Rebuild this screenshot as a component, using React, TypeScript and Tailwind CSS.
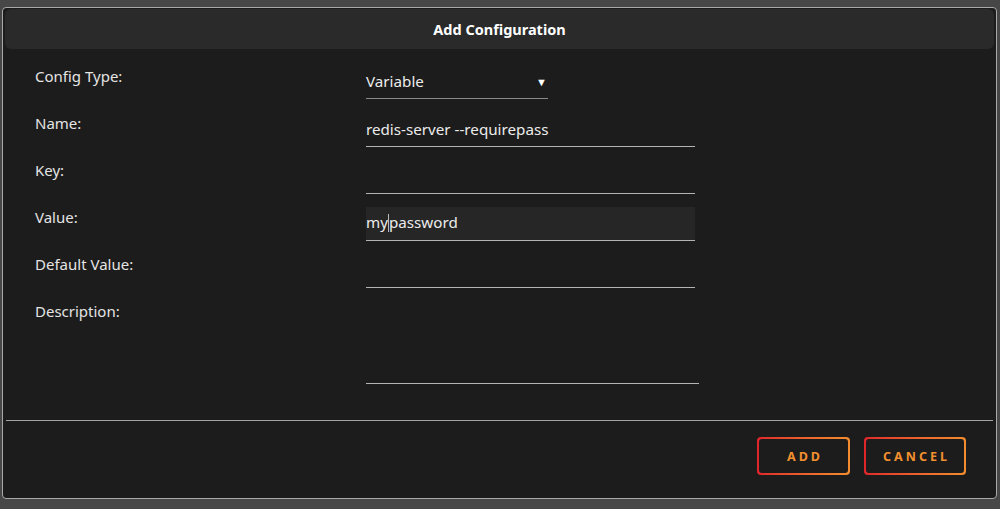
import { useState } from 'react'

const font = { fontFamily: '"Noto Sans", "Open Sans", sans-serif' }

function Row({ label, children, tall }: { label: string, children: React.ReactNode, tall?: boolean }) {
  return (
    <div className={`grid grid-cols-[331px_1fr] ${tall ? 'h-[96px]' : 'h-[47px]'}`}>
      <div className="pt-[13px] text-[15px] leading-[20px] text-[#e4e4e4]">{label}</div>
      <div className={tall ? '' : 'pt-[13px]'}>{children}</div>
    </div>
  )
}

export default function App() {
  const [name, setName] = useState('redis-server --requirepass')
  const [key, setKey] = useState('')
  const [value, setValue] = useState('mypassword')
  const [def, setDef] = useState('')
  const [desc, setDesc] = useState('')

  const inputClass = 'w-[329px] h-[34px] pb-[2px] bg-transparent border-b border-[#b4b4b4] text-[15.2px] text-[#ececec] outline-none'

  return (
    <div className="w-[1000px] h-[509px] bg-[#474747] pt-[7px] pl-[2px]" style={font}>
      <div className="w-[995px] h-[492px] border border-[#a9a9a9] rounded-[4px] bg-[#1c1c1c] px-[2px] pt-[1px] flex flex-col">
        {/* Header */}
        <div className="h-[40px] rounded-[6px] bg-[#2a2a2a] flex items-center justify-center pt-[2px]">
          <h2 className="text-[14.5px] font-bold text-white">Add Configuration</h2>
        </div>

        {/* Form */}
        <div className="pl-[30px] pt-[4px]">
          <Row label="Config Type:">
            <div className="w-[182px] h-[33px] pb-[2px] border-b border-[#8a8a8a] flex items-center justify-between pr-[1px]">
              <span className="text-[15.2px] text-[#ececec]">Variable</span>
              <span className="text-[11px] text-white leading-none">▼</span>
            </div>
          </Row>
          <Row label="Name:">
            <input className={inputClass} value={name} onChange={e => setName(e.target.value)} />
          </Row>
          <Row label="Key:">
            <input className={inputClass} value={key} onChange={e => setKey(e.target.value)} />
          </Row>
          <Row label="Value:">
            <div className="relative w-[329px] h-[34px] pb-[2px] bg-[#262626] border-b border-[#b4b4b4] flex items-center text-[15.2px] text-[#ececec]">
              <span>my</span>
              <span className="w-px h-[18px] bg-[#bbbbbb]"></span>
              <span>password</span>
              <input className="absolute inset-0 opacity-0" value={value} onChange={e => setValue(e.target.value)} />
            </div>
          </Row>
          <Row label="Default Value:">
            <input className={inputClass} value={def} onChange={e => setDef(e.target.value)} />
          </Row>
          <Row label="Description:" tall>
            <textarea
              className="w-[333px] h-[96px] bg-transparent border-b border-[#b4b4b4] text-[15px] text-[#ececec] outline-none resize-none block"
              value={desc}
              onChange={e => setDesc(e.target.value)}
            />
          </Row>
        </div>

        {/* Divider */}
        <div className="mt-[36px] mx-[1px] h-px bg-[#a3a3a3]"></div>

        {/* Actions */}
        <div className="flex justify-end gap-[14px] pt-[16px] pr-[28px]">
          <button className="w-[93px] h-[38px] rounded-[4px] p-[2px] bg-gradient-to-r from-[#e0242a] to-[#f28c2e]">
            <span className="w-full h-full rounded-[3px] bg-[#1c1c1c] flex items-center justify-center text-[12.5px] font-bold tracking-[3px] text-[#f3902e] pl-[3px] pt-[3px]">ADD</span>
          </button>
          <button className="w-[102px] h-[38px] rounded-[4px] p-[2px] bg-gradient-to-r from-[#e0242a] to-[#f28c2e]">
            <span className="w-full h-full rounded-[3px] bg-[#1c1c1c] flex items-center justify-center text-[12.5px] font-bold tracking-[3px] text-[#f3902e] pl-[3px] pt-[3px]">CANCEL</span>
          </button>
        </div>
      </div>
    </div>
  )
}
